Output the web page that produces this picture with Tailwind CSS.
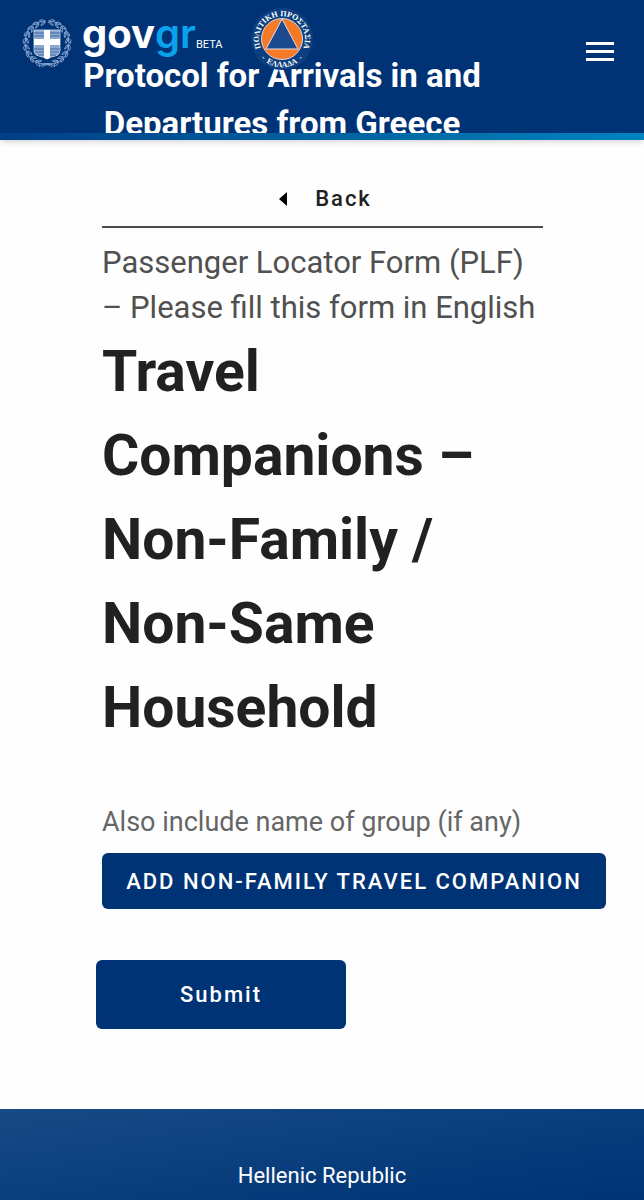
<!DOCTYPE html>
<html lang="en">
<head>
    <meta charset="UTF-8">
    <meta name="viewport" content="width=device-width, initial-scale=1.0">
    <title>Travel Companions - Passenger Locator Form</title>
    <script src="https://cdn.jsdelivr.net/npm/@tailwindcss/browser@4"></script>
</head>
<body class="flex min-h-screen flex-col bg-[#fefefe] font-['Roboto',sans-serif] text-[#212121]">
    <!-- Header -->
    <header class="relative bg-[#003375] text-white shadow-md">
        <div class="flex h-[133px] items-start justify-between overflow-hidden pr-7 pl-20">
            <p class="mt-[52px] w-[404px] text-center text-[33px] leading-[48px] font-bold">Protocol for Arrivals in and Departures from Greece</p>
            <button type="button" aria-label="Menu" class="mt-9">
                <svg class="h-8 w-8" viewBox="0 0 32 32" fill="#ffffff">
                    <path d="M2 6h28v3H2zM2 14h28v3H2zM2 22h28v3H2z"/>
                </svg>
            </button>
        </div>
        <div class="h-[7px] bg-linear-to-r from-[#003f85] to-[#0084bd]"></div>

        <!-- Logos sit on top of the title -->
        <div class="absolute top-2 left-5 flex items-start">
            <a href="#" class="flex items-start" aria-label="gov.gr">
                <svg class="mt-2 h-[54px] w-[54px]" viewBox="0 0 54 54" fill="none">
                    <defs>
                        <g id="leaf">
                            <path d="M27 5q-3-3-6-1 2 3 6 1zM27 6q-2 3-5 3 1-3 5-3z"/>
                        </g>
                        <g id="branch">
                            <use href="#leaf" transform="rotate(-4 27 27)"/>
                            <use href="#leaf" transform="rotate(-22 27 27)"/>
                            <use href="#leaf" transform="rotate(-40 27 27)"/>
                            <use href="#leaf" transform="rotate(-58 27 27)"/>
                            <use href="#leaf" transform="rotate(-76 27 27)"/>
                            <use href="#leaf" transform="rotate(-94 27 27)"/>
                            <use href="#leaf" transform="rotate(-112 27 27)"/>
                            <use href="#leaf" transform="rotate(-130 27 27)"/>
                            <use href="#leaf" transform="rotate(-148 27 27)"/>
                            <path d="M27 49Q5 47 5 27T23 5"/>
                        </g>
                    </defs>
                    <g stroke="#8facd8" stroke-width="0.8">
                        <use href="#branch"/>
                        <use href="#branch" transform="matrix(-1 0 0 1 54 0)"/>
                        <path d="M19 51q6-5 14-3M35 51q-6-5-14-3M22 51l5-3 5 3"/>
                    </g>
                    <path d="M14 14h26v20q0 5-5 6-5 1-8 3-3-2-8-3-5-1-5-6z" fill="#8ba6cf" stroke="#d5e1f2" stroke-width="0.8"/>
                    <path d="M14 17h26M14 20h26M14 33h26M15 36h24M18 39h18" stroke="#436ba7"/>
                    <path d="M24 14h6v9h10v6H30v13l-3 1-3-1V29H14v-6h10z" fill="#ffffff"/>
                </svg>
                <span class="ml-2 font-['Inter',sans-serif] text-[40px] leading-[52px] font-bold">gov<span class="font-semibold text-[#0aa2ec]">gr</span></span>
                <span class="mt-[29px] text-[11px] leading-4">BETA</span>
            </a>
            <svg class="ml-7 h-[62px] w-[62px]" viewBox="0 0 62 62" role="img" aria-label="Civil Protection">
                <defs>
                    <path id="ring-top" d="M11 42.500A23 23 0 1 1 51 42.500"/>
                    <path id="ring-bottom" d="M6.300 45A28.500 28.500 0 0 0 55.700 45"/>
                </defs>
                <circle cx="31" cy="31" r="31" fill="#0c3f80"/>
                <circle cx="31" cy="31" r="20.500" fill="#f47a28" stroke="#d9d4df"/>
                <path d="M31 11L47 41H15z" fill="#1c4a8e" stroke="#e7dce0"/>
                <g fill="#ffffff" font-family="Liberation Serif, serif" font-size="8" font-weight="bold" text-anchor="middle">
                    <text><textPath href="#ring-top" startOffset="50%">ΠΟΛΙΤΙΚΗ ΠΡΟΣΤΑΣΙΑ</textPath></text>
                    <text><textPath href="#ring-bottom" startOffset="50%">-&#160;&#160;ΕΛΛΑΔΑ&#160;&#160;-</textPath></text>
                </g>
            </svg>
        </div>
    </header>

    <!-- Form -->
    <main class="grow pt-9 pr-[101px] pb-20 pl-[102px]">
        <a href="#" class="flex items-center justify-center gap-7 border-b-2 border-[#4d4a4c] pt-[7px] pb-[11px] pl-[6px] text-[22px] leading-8 font-medium tracking-[2px]">
            <svg class="h-4 w-2" viewBox="0 0 8 16" fill="#000000"><path d="M8 1v14L0 8z"/></svg>
            Back
        </a>
        <p class="mt-3 text-[31px] leading-[45px] text-[#505050]">Passenger Locator Form (PLF) – Please fill this form in English</p>
        <h1 class="text-[57px] leading-[84px] font-bold">Travel Companions – Non-Family / Non-Same Household</h1>
        <form>
            <p class="mt-[53px] text-[27px] leading-[38px] text-[#666666]">Also include name of group (if any)</p>
            <button type="button" class="mt-3 h-14 w-[504px] rounded-md bg-[#003375] text-[22px] font-medium tracking-[2px] whitespace-nowrap text-white">ADD NON-FAMILY TRAVEL COMPANION</button>
            <button type="submit" class="mt-[51px] -ml-[6px] block h-[69px] w-[250px] rounded-md bg-[#003375] text-[22px] font-medium tracking-[2px] text-white">Submit</button>
        </form>
    </main>

    <!-- Footer -->
    <footer class="bg-linear-to-br from-[#174b86] via-[#0a3e7d] to-[#003375] pt-[50px] pb-2 text-center text-[22px] leading-[34px] text-white">
        <p>Hellenic Republic</p>
    </footer>
</body>
</html>
